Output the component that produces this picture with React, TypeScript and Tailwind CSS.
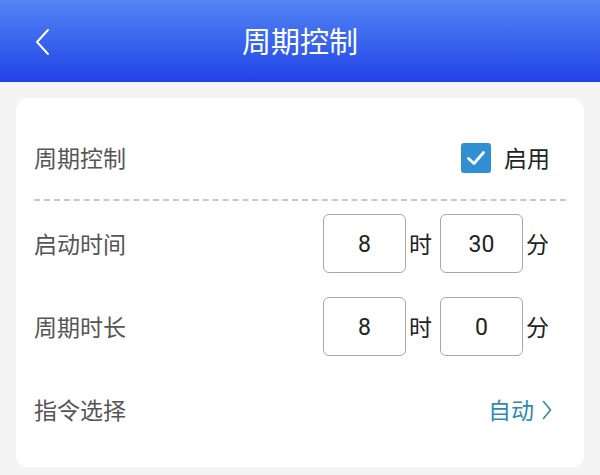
const cjk = "font-['Noto_Sans_CJK_SC','Noto_Sans',sans-serif]";

const TimeBox = ({ value }: { value: string }) => (
  <div className="flex h-[59px] w-[83px] items-center justify-center rounded-[6px] border-[1.5px] border-[#a8a8a8] pt-[3px] text-[23px] text-[#222] font-['Roboto',sans-serif]">
    {value}
  </div>
);

const TimeRow = ({ label, hour, minute }: { label: string; hour: string; minute: string }) => (
  <div className="flex h-[83px] items-center justify-between pr-[17px]">
    <span className="text-[23px] text-[#555]">{label}</span>
    <div className="flex items-center text-[23px] text-[#222]">
      <TimeBox value={hour} />
      <span className="ml-[3px] mr-[8px]">时</span>
      <TimeBox value={minute} />
      <span className="ml-[3px]">分</span>
    </div>
  </div>
);

export default function App() {
  return (
    <div className={`h-[475px] w-[600px] overflow-hidden bg-[#f4f4f4] ${cjk}`}>
      <div className="relative flex h-[82px] items-center justify-center bg-gradient-to-b from-[#5583f3] to-[#2340e7]">
        <svg className="absolute left-[34px] top-[28px]" width="16" height="28" viewBox="0 0 16 28" fill="none">
          <path d="M14 2 L3 14 L14 26" stroke="white" strokeWidth="2" strokeLinecap="round" strokeLinejoin="round" />
        </svg>
        <span className="text-[29px] text-white">周期控制</span>
      </div>

      <div className="mx-[16px] mt-[16px] rounded-[12px] bg-white px-[18px] pt-[18px] pb-[16px]">
        <div className="flex h-[83px] items-center justify-between pr-[16px]">
          <span className="text-[23px] text-[#555]">周期控制</span>
          <div className="flex items-center gap-[13px]">
            <div className="flex h-[30px] w-[30px] items-center justify-center rounded-[3px] bg-[#2f8fd2]">
              <svg width="22" height="22" viewBox="0 0 22 22" fill="none">
                <path d="M3.5 11.5 L9 16.5 L18.5 5.5" stroke="white" strokeWidth="2.8" strokeLinecap="round" strokeLinejoin="round" />
              </svg>
            </div>
            <span className="text-[23px] text-[#222]">启用</span>
          </div>
        </div>
        <div className="border-t-2 border-dashed border-[#c8c8c8]" />
        <div className="pt-[1px]">
          <TimeRow label="启动时间" hour="8" minute="30" />
          <TimeRow label="周期时长" hour="8" minute="0" />
        </div>
        <div className="flex h-[83px] items-center justify-between pr-[14px]">
          <span className="text-[23px] text-[#555]">指令选择</span>
          <div className="flex items-center gap-[8px] text-[23px] text-[#2f8ab5]">
            <span>自动</span>
            <svg width="10" height="20" viewBox="0 0 10 20" fill="none">
              <path d="M1.5 1.5 L8.5 10 L1.5 18.5" stroke="#2f8ab5" strokeWidth="1.6" strokeLinecap="round" strokeLinejoin="round" />
            </svg>
          </div>
        </div>
      </div>
    </div>
  );
}
